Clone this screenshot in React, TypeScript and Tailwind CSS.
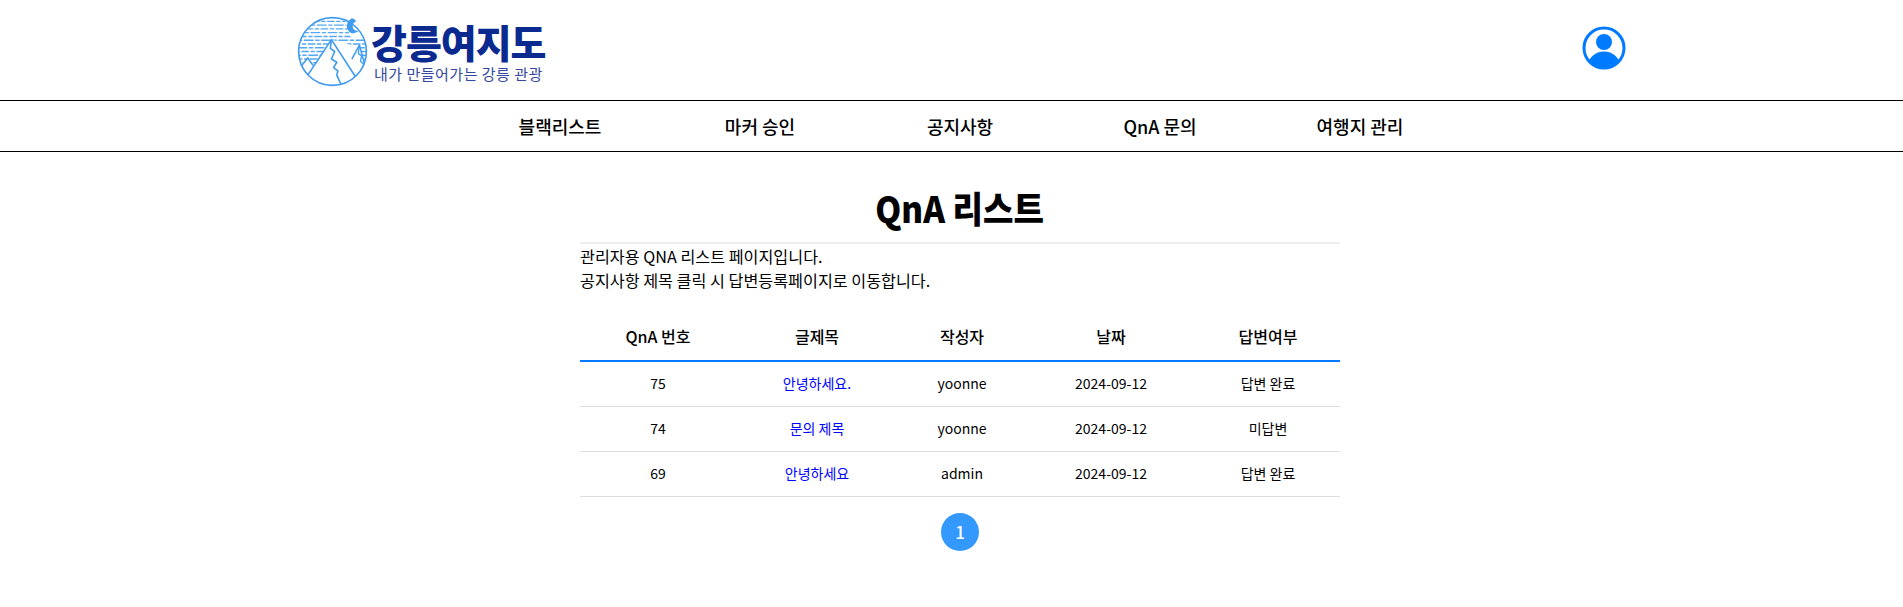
const navItems = ['블랙리스트', '마커 승인', '공지사항', 'QnA 문의', '여행지 관리'];

const rows = [
  { id: 75, title: '안녕하세요.', writer: 'yoonne', date: '2024-09-12', status: '답변 완료' },
  { id: 74, title: '문의 제목', writer: 'yoonne', date: '2024-09-12', status: '미답변' },
  { id: 69, title: '안녕하세요', writer: 'admin', date: '2024-09-12', status: '답변 완료' },
];

const font = "font-['Noto_Sans_CJK_KR','Noto_Sans',sans-serif]";

// brick rows behind the mountains
const brickRows = [5, 8.5, 12, 15.5, 19, 22.5, 26, 29.5, 33, 36.5, 40, 43.5];

const Logo = () => (
  <svg width="71" height="71" viewBox="0 0 66 66" fill="none" className="shrink-0">
    <defs>
      <clipPath id="logo-clip">
        <circle cx="33" cy="33" r="31.5" />
      </clipPath>
    </defs>
    <g clipPath="url(#logo-clip)">
      {brickRows.map((y, i) => (
        <path
          key={y}
          d={`M0 ${y}H66`}
          stroke="#55a8f3"
          strokeWidth="1.3"
          strokeDasharray={i % 2 === 0 ? '7 1.5 4 1.5' : '4 1.5 9 1.5'}
          strokeDashoffset={i * 3}
        />
      ))}
      <path d="M43 0h23v20H50z" fill="#fff" />
      <path d="M3 45l7-6 7 7 15-24 26 7 8 20v19H0z" fill="#fff" />
      <path d="M2 49l8-10 5 7M4 47l3 4" stroke="#3f9bf0" strokeWidth="1.4" />
      <path d="M51 40l7-13 6 22" stroke="#3f9bf0" strokeWidth="1.4" strokeLinejoin="round" />
      <path d="M58 27l-1 8 3 2-1 5 3 3-1 5" stroke="#3f9bf0" strokeWidth="1.2" strokeLinejoin="round" />
      <path
        d="M8 58L32 22l24 37M32 22l-1 8 4 3-3 7 5 3-3 5 4 3-1 4 5 11"
        stroke="#3f9bf0"
        strokeWidth="1.5"
        strokeLinejoin="round"
      />
    </g>
    <circle cx="33" cy="33" r="31.5" stroke="#3f9bf0" strokeWidth="1.5" />
    <path d="M51 2C45 5 45 13 50 15.5c2 1 5 .5 7-1.5-4 0-6-3-5-6 .5-2 2-3 3-3-1-2-3-3-4-3z" fill="#3f9bf0" />
  </svg>
);

const UserIcon = () => (
  <svg width="44" height="44" viewBox="0 0 44 44" className="mb-[8px] shrink-0">
    <defs>
      <clipPath id="user-clip">
        <circle cx="22" cy="22" r="20" />
      </clipPath>
    </defs>
    <circle cx="22" cy="22" r="20" fill="#fff" stroke="#007bff" strokeWidth="3" />
    <circle cx="22" cy="16" r="8" fill="#007bff" />
    <ellipse cx="22" cy="40" rx="16" ry="14.5" fill="#007bff" clipPath="url(#user-clip)" />
  </svg>
);

export default function App() {
  return (
    <div className={`${font} min-h-[607px] bg-white text-black`}>
      <header className="flex h-[100px] items-center justify-between pt-[3px] pl-[297px] pr-[277px]">
        <div className="flex items-center gap-[3px]">
          <Logo />
          <div className="flex flex-col">
            <span className="text-[39px] leading-[40px] font-black tracking-[-1px] text-[#0a2a8f]">강릉여지도</span>
            <span className="mt-[4px] pl-[3px] text-[15px] leading-[18px] tracking-[0.5px] text-[#33489e]">
              내가 만들어가는 강릉 관광
            </span>
          </div>
        </div>
        <UserIcon />
      </header>

      <nav className="flex h-[52px] items-center border-y border-black pl-[460px]">
        <ul className="flex">
          {navItems.map((item) => (
            <li key={item} className="flex w-[200px] justify-center text-[18px] font-medium">
              {item}
            </li>
          ))}
        </ul>
      </nav>

      <main className="ml-[580px] w-[760px]">
        <h1 className="mt-[25px] border-b-2 border-[#eeeeee] pb-[5px] text-center text-[36px] leading-[60px] font-black">
          <span className="inline-block scale-x-[0.92]">QnA 리스트</span>
        </h1>
        <p className="text-[16.2px] leading-[24px]">
          관리자용 QNA 리스트 페이지입니다.
          <br />
          공지사항 제목 클릭 시 답변등록페이지로 이동합니다.
        </p>

        <table className="mt-[20px] w-full table-fixed border-collapse text-center">
          <colgroup>
            <col className="w-[156px]" />
            <col className="w-[162px]" />
            <col className="w-[128px]" />
            <col className="w-[170px]" />
            <col className="w-[144px]" />
          </colgroup>
          <thead>
            <tr className="h-[49px] border-b-2 border-[#007bff] text-[16px]">
              <th className="font-medium">QnA 번호</th>
              <th className="font-medium">글제목</th>
              <th className="font-medium">작성자</th>
              <th className="font-medium">날짜</th>
              <th className="font-medium">답변여부</th>
            </tr>
          </thead>
          <tbody className="text-[14px]">
            {rows.map((row) => (
              <tr key={row.id} className="h-[45px] border-b border-[#dddddd]">
                <td>{row.id}</td>
                <td className="text-[#0000ff]">{row.title}</td>
                <td>{row.writer}</td>
                <td>{row.date}</td>
                <td>{row.status}</td>
              </tr>
            ))}
          </tbody>
        </table>

        <div className="mt-[16px] flex justify-center">
          <span className="flex h-[38px] w-[38px] items-center justify-center rounded-full bg-[#3399ff] text-[17px] font-medium text-white">
            1
          </span>
        </div>
      </main>
    </div>
  );
}
